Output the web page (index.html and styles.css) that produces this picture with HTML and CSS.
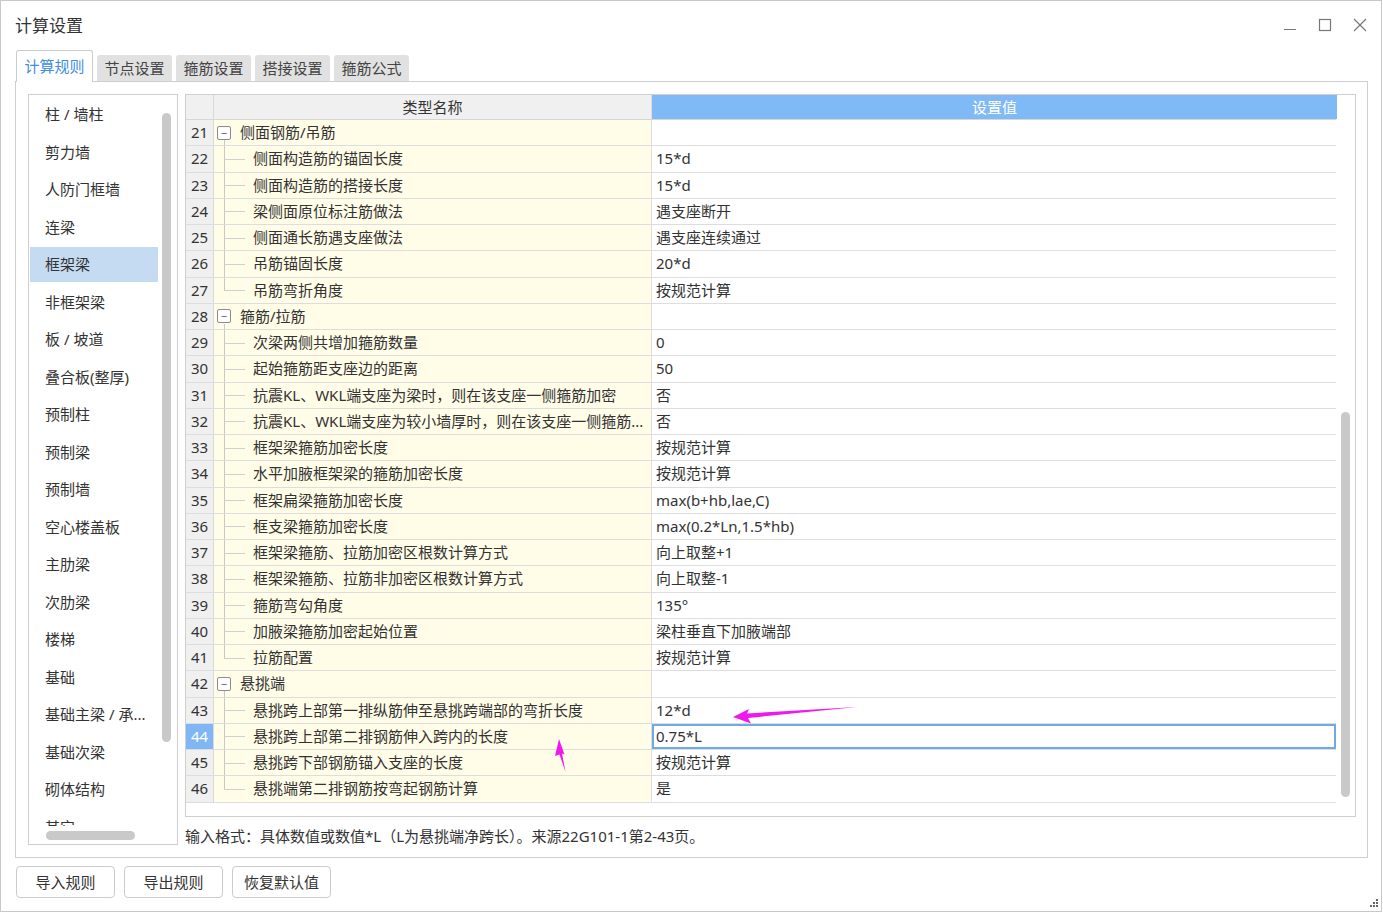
FILE: index.html
```html
<!DOCTYPE html>
<html lang="zh-CN">
<head>
<meta charset="utf-8">
<title>计算设置</title>
<link rel="stylesheet" href="styles.css">
</head>
<body>
<div class="window">
  <div class="titlebar">
    <div class="title">计算设置</div>
    <div class="controls">
      <svg class="ctl" width="16" height="16" viewBox="0 0 16 16"><line x1="2" y1="12.5" x2="14" y2="12.5" stroke="#777" stroke-width="1"/></svg>
      <svg class="ctl" width="16" height="16" viewBox="0 0 16 16"><rect x="2.5" y="2.5" width="11" height="11" fill="none" stroke="#777" stroke-width="1.2"/></svg>
      <svg class="ctl" width="16" height="16" viewBox="0 0 16 16"><path d="M2 2 L14 14 M14 2 L2 14" stroke="#777" stroke-width="1.2"/></svg>
    </div>
  </div>

  <div class="tabs">
    <div class="tab active">计算规则</div>
    <div class="tab">节点设置</div>
    <div class="tab">箍筋设置</div>
    <div class="tab">搭接设置</div>
    <div class="tab">箍筋公式</div>
  </div>

  <div class="panel">
    <div class="sidebar">
      <div class="side-items">
        <div class="side-item">柱 / 墙柱</div>
        <div class="side-item">剪力墙</div>
        <div class="side-item">人防门框墙</div>
        <div class="side-item">连梁</div>
        <div class="side-item selected">框架梁</div>
        <div class="side-item">非框架梁</div>
        <div class="side-item">板 / 坡道</div>
        <div class="side-item">叠合板(整厚)</div>
        <div class="side-item">预制柱</div>
        <div class="side-item">预制梁</div>
        <div class="side-item">预制墙</div>
        <div class="side-item">空心楼盖板</div>
        <div class="side-item">主肋梁</div>
        <div class="side-item">次肋梁</div>
        <div class="side-item">楼梯</div>
        <div class="side-item">基础</div>
        <div class="side-item">基础主梁 / 承...</div>
        <div class="side-item">基础次梁</div>
        <div class="side-item">砌体结构</div>
        <div class="side-item">其它</div>
      </div>
      <div class="side-hscroll"><div class="hthumb"></div></div>
      <div class="side-vthumb"></div>
    </div>

    <div class="main">
      <div class="grid-box">
        <div class="grid">
          <div class="row header">
            <div class="num"></div>
            <div class="name">类型名称</div>
            <div class="val">设置值</div>
          </div>
          <div class="row"><div class="num">21</div><div class="name group"><span class="box">−</span>侧面钢筋/吊筋</div><div class="val"></div></div>
          <div class="row"><div class="num">22</div><div class="name child">侧面构造筋的锚固长度</div><div class="val">15*d</div></div>
          <div class="row"><div class="num">23</div><div class="name child">侧面构造筋的搭接长度</div><div class="val">15*d</div></div>
          <div class="row"><div class="num">24</div><div class="name child">梁侧面原位标注筋做法</div><div class="val">遇支座断开</div></div>
          <div class="row"><div class="num">25</div><div class="name child">侧面通长筋遇支座做法</div><div class="val">遇支座连续通过</div></div>
          <div class="row"><div class="num">26</div><div class="name child">吊筋锚固长度</div><div class="val">20*d</div></div>
          <div class="row"><div class="num">27</div><div class="name child last">吊筋弯折角度</div><div class="val">按规范计算</div></div>
          <div class="row"><div class="num">28</div><div class="name group"><span class="box">−</span>箍筋/拉筋</div><div class="val"></div></div>
          <div class="row"><div class="num">29</div><div class="name child">次梁两侧共增加箍筋数量</div><div class="val">0</div></div>
          <div class="row"><div class="num">30</div><div class="name child">起始箍筋距支座边的距离</div><div class="val">50</div></div>
          <div class="row"><div class="num">31</div><div class="name child">抗震KL、WKL端支座为梁时，则在该支座一侧箍筋加密</div><div class="val">否</div></div>
          <div class="row"><div class="num">32</div><div class="name child">抗震KL、WKL端支座为较小墙厚时，则在该支座一侧箍筋...</div><div class="val">否</div></div>
          <div class="row"><div class="num">33</div><div class="name child">框架梁箍筋加密长度</div><div class="val">按规范计算</div></div>
          <div class="row"><div class="num">34</div><div class="name child">水平加腋框架梁的箍筋加密长度</div><div class="val">按规范计算</div></div>
          <div class="row"><div class="num">35</div><div class="name child">框架扁梁箍筋加密长度</div><div class="val">max(b+hb,lae,C)</div></div>
          <div class="row"><div class="num">36</div><div class="name child">框支梁箍筋加密长度</div><div class="val">max(0.2*Ln,1.5*hb)</div></div>
          <div class="row"><div class="num">37</div><div class="name child">框架梁箍筋、拉筋加密区根数计算方式</div><div class="val">向上取整+1</div></div>
          <div class="row"><div class="num">38</div><div class="name child">框架梁箍筋、拉筋非加密区根数计算方式</div><div class="val">向上取整-1</div></div>
          <div class="row"><div class="num">39</div><div class="name child">箍筋弯勾角度</div><div class="val">135°</div></div>
          <div class="row"><div class="num">40</div><div class="name child">加腋梁箍筋加密起始位置</div><div class="val">梁柱垂直下加腋端部</div></div>
          <div class="row"><div class="num">41</div><div class="name child last">拉筋配置</div><div class="val">按规范计算</div></div>
          <div class="row"><div class="num">42</div><div class="name group"><span class="box">−</span>悬挑端</div><div class="val"></div></div>
          <div class="row"><div class="num">43</div><div class="name child">悬挑跨上部第一排纵筋伸至悬挑跨端部的弯折长度</div><div class="val">12*d</div></div>
          <div class="row current"><div class="num">44</div><div class="name child">悬挑跨上部第二排钢筋伸入跨内的长度</div><div class="val">0.75*L</div></div>
          <div class="row"><div class="num">45</div><div class="name child">悬挑跨下部钢筋锚入支座的长度</div><div class="val">按规范计算</div></div>
          <div class="row"><div class="num">46</div><div class="name child last">悬挑端第二排钢筋按弯起钢筋计算</div><div class="val">是</div></div>
        </div>
        <div class="grid-scroll"><div class="vthumb"></div></div>
      </div>
      <div class="hint">输入格式：具体数值或数值*L（L为悬挑端净跨长）。来源22G101-1第2-43页。</div>
    </div>
  </div>

  <div class="buttons">
    <div class="btn">导入规则</div>
    <div class="btn">导出规则</div>
    <div class="btn">恢复默认值</div>
  </div>

  <svg class="grip" width="12" height="12" viewBox="0 0 12 12">
    <rect x="9" y="1" width="2" height="2" fill="#666"/>
    <rect x="6" y="4" width="2" height="2" fill="#666"/>
    <rect x="9" y="4" width="2" height="2" fill="#666"/>
    <rect x="3" y="7" width="2" height="2" fill="#666"/>
    <rect x="6" y="7" width="2" height="2" fill="#666"/>
    <rect x="9" y="7" width="2" height="2" fill="#666"/>
  </svg>

  <svg class="annot" width="1383" height="913" viewBox="0 0 1383 913">
    <polygon points="733,717 749,709 747,713.5 857,707 748,718 751,723.5" fill="#f018ef"/>
    <polygon points="559,739 564.5,754.5 562,753.5 565.5,772 559.5,754.5 555,756" fill="#f018ef"/>
  </svg>
</div>
</body>
</html>
```

FILE: styles.css
```css
* { box-sizing: border-box; }

html, body {
  margin: 0;
  padding: 0;
  background: #ffffff;
}

body {
  font-family: "Noto Sans", "Noto Sans CJK SC", sans-serif;
  font-size: 15px;
  color: #333333;
}

.window {
  position: relative;
  width: 1382px;
  height: 912px;
  border: 1px solid #c8c8c8;
  background: #ffffff;
  display: flex;
  flex-direction: column;
}

.titlebar {
  height: 49px;
  display: flex;
  align-items: center;
  justify-content: space-between;
  padding: 0 13px 0 14px;
}

.title {
  font-size: 17px;
  line-height: 20px;
  color: #333;
}

.controls {
  display: flex;
  gap: 19px;
  align-items: center;
  margin-top: -1px;
}

.ctl { display: block; }

.tabs {
  height: 31px;
  display: flex;
  align-items: flex-end;
  padding-left: 15px;
  gap: 4px;
  position: relative;
  z-index: 2;
}

.tab {
  width: 75px;
  height: 26px;
  background: #e1e1e1;
  border-radius: 3px 3px 0 0;
  text-align: center;
  font-size: 15px;
  line-height: 26px;
  color: #444;
}

.tab.active {
  width: 77px;
  height: 32px;
  margin-bottom: -1px;
  background: #ffffff;
  border: 1px solid #cccccc;
  border-bottom: none;
  color: #3d8ee0;
  line-height: 30px;
}

.panel {
  margin: 0 13px 0 14px;
  height: 777px;
  border: 1px solid #cfcfcf;
  padding: 12px 11px 11px 12px;
  display: flex;
  gap: 7px;
}

.sidebar {
  position: relative;
  width: 150px;
  height: 751px;
  border: 1px solid #cfcfcf;
  display: flex;
  flex-direction: column;
}

.side-items {
  height: 731px;
  overflow: hidden;
  padding-top: 2px;
}

.side-item {
  width: 128px;
  height: 35px;
  margin: 0 0 2.5px 1px;
  padding-left: 15px;
  line-height: 35px;
  font-size: 15px;
  color: #333;
  white-space: nowrap;
}

.side-item.selected {
  background: #c5dbf1;
}

.side-hscroll {
  height: 18px;
  padding: 5px 0 0 17px;
}

.hthumb {
  width: 89px;
  height: 9px;
  border-radius: 5px;
  background: #c9c9c9;
}

.side-vthumb {
  position: absolute;
  left: 133px;
  top: 18px;
  width: 9px;
  height: 629px;
  border-radius: 5px;
  background: #c9c9c9;
}

.main {
  flex: 1;
  display: flex;
  flex-direction: column;
}

.grid-box {
  height: 723px;
  border: 1px solid #cfcfcf;
  display: flex;
}

.grid {
  width: 1150px;
  display: flex;
  flex-direction: column;
}

.row {
  display: flex;
  height: 26.25px;
  border-bottom: 1px solid #dddddd;
}

.row > div {
  line-height: 25px;
  white-space: nowrap;
  overflow: hidden;
}

.row.header {
  height: 25px;
  border-bottom: 1px solid #d6d6d6;
}

.row.header > div { line-height: 24px; }

.num {
  width: 28px;
  flex: none;
  background: #f0f0f0;
  border-right: 1px solid #d9d9d9;
  text-align: center;
  color: #333;
}

.name {
  width: 438px;
  flex: none;
  position: relative;
  background: #fffce7;
  border-right: 1px solid #dedede;
  color: #333;
}

.val {
  flex: 1;
  padding-left: 4px;
  background: #ffffff;
  color: #333;
}

.header .name {
  background: #f0f0f0;
  text-align: center;
}

.header .val {
  background: #7fbaf7;
  color: #ffffff;
  text-align: center;
  padding-left: 0;
  margin-right: -1px;
}

.name.group {
  display: flex;
  align-items: center;
}

.box {
  width: 14px;
  height: 14px;
  margin: 0 9px 0 3px;
  border: 1px solid #8c8c8c;
  border-radius: 2px;
  background: #ffffff;
  font-size: 11px;
  line-height: 11px;
  text-align: center;
  color: #555;
  position: relative;
  z-index: 1;
}

.name.group::after {
  content: "";
  position: absolute;
  left: 10px;
  top: 20px;
  bottom: -1px;
  border-left: 1px solid #c8c8c8;
}

.name.child {
  padding-left: 39px;
}

.name.child::before {
  content: "";
  position: absolute;
  left: 10px;
  top: -1px;
  bottom: -1px;
  border-left: 1px solid #c8c8c8;
}

.name.child.last::before {
  bottom: 50%;
}

.name.child::after {
  content: "";
  position: absolute;
  left: 10px;
  width: 21px;
  top: 50%;
  border-top: 1px solid #d0d0d0;
}

.row.current .num {
  background: #7fb6f3;
  color: #ffffff;
}

.row.current .val {
  border: 2px solid #6fa9e8;
  padding-left: 2px;
  line-height: 21px;
}

.grid-scroll {
  flex: 1;
  padding: 317px 0 0 5px;
}

.vthumb {
  width: 9px;
  height: 385px;
  border-radius: 5px;
  background: #c9c9c9;
}

.hint {
  padding-top: 9px;
  font-size: 15px;
  line-height: 20px;
  color: #333;
  white-space: nowrap;
}

.buttons {
  display: flex;
  gap: 9px;
  margin: 8px 0 0 15px;
}

.btn {
  width: 99px;
  height: 32px;
  border: 1px solid #cccccc;
  border-radius: 4px;
  background: #ffffff;
  text-align: center;
  line-height: 30px;
  font-size: 15px;
  color: #333;
}

.grip {
  position: absolute;
  right: 2px;
  bottom: 1px;
}

.annot {
  position: absolute;
  left: -1px;
  top: -1px;
  pointer-events: none;
}
```
